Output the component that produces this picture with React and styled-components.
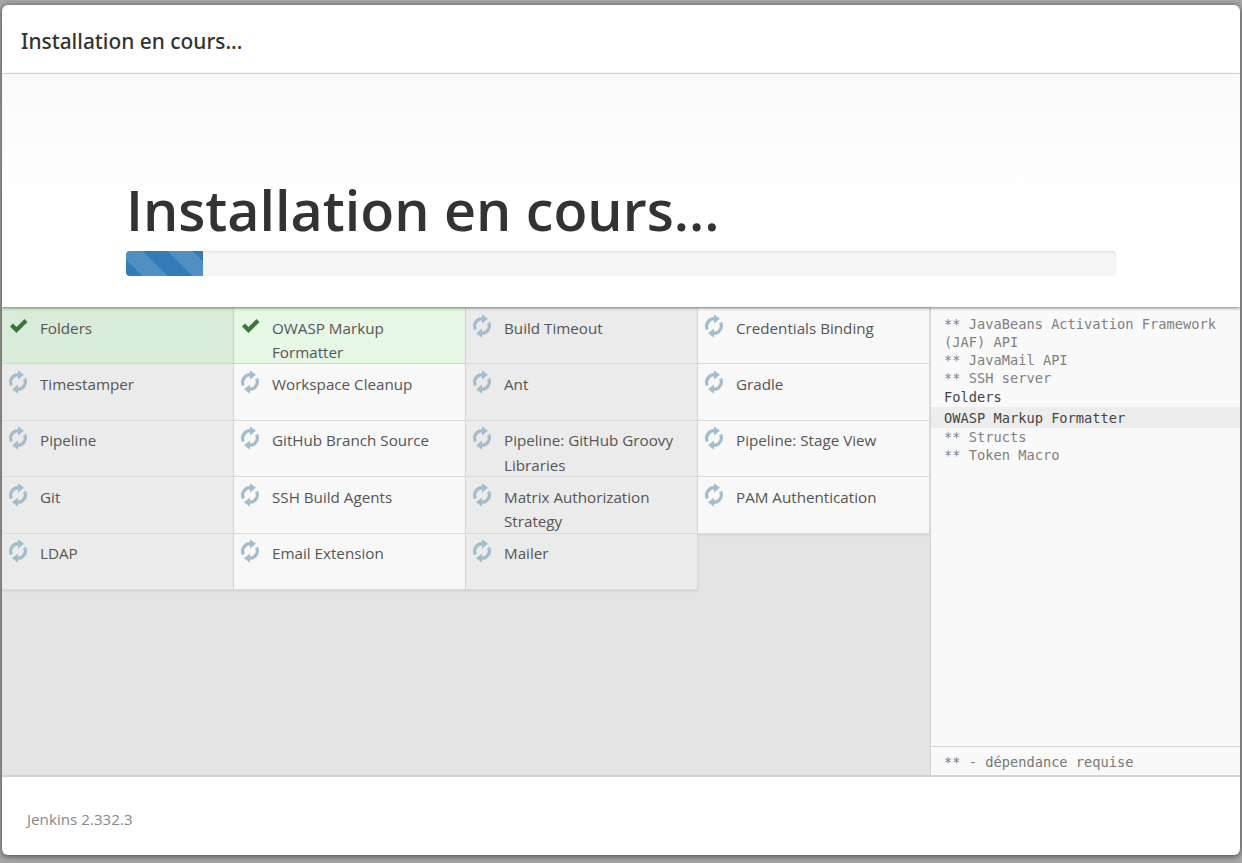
import React from "react";
import styled, { createGlobalStyle } from "styled-components";

const Global = createGlobalStyle`
  html, body { margin: 0; padding: 0; height: 100%; background: #8f8f8f; }
  #root { height: 100%; }
  * { box-sizing: border-box; }
`;

const Backdrop = styled.div`
  width: 1242px;
  height: 863px;
  padding: 5px 2px 8px;
  background: #a6a6a6;
  overflow: hidden;
  font-family: "Open Sans", "Noto Sans", sans-serif;
`;

const Dialog = styled.div`
  width: 1238px;
  height: 850px;
  background: #fff;
  border-radius: 6px;
  box-shadow: 0 1px 6px rgba(0, 0, 0, 0.6);
  overflow: hidden;
  display: flex;
  flex-direction: column;
`;

const Header = styled.div`
  height: 69px;
  flex: none;
  padding: 3px 19px 0;
  display: flex;
  align-items: center;
  border-bottom: 1px solid #e5e5e5;
  font-family: "Noto Sans", "Open Sans", sans-serif;
  font-size: 20.9px;
  font-weight: 500;
  color: #333;
  white-space: nowrap;
`;

const Hero = styled.div`
  height: 233px;
  flex: none;
  padding: 102px 124px 0;
  background: linear-gradient(#f9f9f9, #ffffff 55%);
  box-shadow: 0 1px 3px rgba(0, 0, 0, 0.5);
  position: relative;
  z-index: 1;
`;

const Title = styled.h1`
  margin: 0 0 7px;
  font-size: 55.6px;
  line-height: 68px;
  font-weight: 600;
  color: #333;
  white-space: nowrap;
`;

const Track = styled.div`
  height: 25px;
  border-radius: 4px;
  background: #f5f5f5;
  box-shadow: inset 0 1px 2px rgba(0, 0, 0, 0.1);
  overflow: hidden;
`;

const Fill = styled.div`
  height: 100%;
  background-color: #337ab7;
  background-image: linear-gradient(
    45deg,
    rgba(255, 255, 255, 0.15) 25%,
    transparent 25%,
    transparent 50%,
    rgba(255, 255, 255, 0.15) 50%,
    rgba(255, 255, 255, 0.15) 75%,
    transparent 75%,
    transparent
  );
  background-size: 50px 50px;
  background-position: -8px 0;
`;

const Main = styled.div`
  height: 470px;
  flex: none;
  display: flex;
  background: #e4e4e4;
  border-bottom: 2px solid #d2d2d2;
`;

const Grid = styled.div`
  width: 928px;
  flex: none;
  display: grid;
  grid-template-columns: repeat(4, 232px);
  grid-auto-rows: 56.4px;
  align-content: start;
  padding-top: 1px;
`;

const tones = {
  doneOdd: "#d9ecd9",
  doneEven: "#e6f7e6",
  odd: "#ebebeb",
  even: "#f8f8f8",
};

const Cell = styled.div`
  display: flex;
  align-items: flex-start;
  padding: 7.6px 22px 0 6px;
  background: ${(p) => tones[p.$tone]};
  box-shadow: inset -1px -1px 0 ${(p) => (p.$tone.startsWith("done") ? "#c9dcc9" : "#dcdcdc")},
    0 1px 2px rgba(0, 0, 0, 0.1);
`;

const IconBox = styled.div`
  width: 32px;
  flex: none;
  height: 24px;
  display: flex;
  align-items: flex-start;
`;

const Name = styled.span`
  font-size: 15.2px;
  line-height: 24.3px;
  color: #555;
`;

const Side = styled.div`
  flex: 1;
  display: flex;
  flex-direction: column;
  background: #f9f9f9;
  border-left: 1px solid #d4d4d4;
  font-family: "DejaVu Sans Mono", monospace;
  font-size: 13.7px;
  color: #777;
`;

const Log = styled.div`
  flex: 1;
  padding-top: 8px;
`;

const LogLine = styled.div`
  margin-top: ${(p) => (p.$active ? "1px" : "0")};
  padding: ${(p) => (p.$active ? "2px 10px 1px 13px" : "0 10px 0 13px")};
  line-height: 18.15px;
  color: ${(p) => (p.$plain ? "#444" : "#808080")};
  background: ${(p) => (p.$active ? "#ededed" : "transparent")};
`;

const Legend = styled.div`
  height: 29px;
  flex: none;
  padding: 6px 13px 0;
  line-height: 18px;
  border-top: 1px solid #d4d4d4;
`;

const Footer = styled.div`
  flex: 1;
  display: flex;
  align-items: center;
  padding: 6px 25px 0;
  font-size: 15.2px;
  color: #888;
`;

const Check = () => (
  <svg width="20" height="16" viewBox="0 0 20 16" style={{ marginTop: 2, marginLeft: 1 }}>
    <path d="M1 8.5 L4 5.5 L7.5 9 L15.5 1 L18.5 4 L7.5 15 Z" fill="#3c763d" />
  </svg>
);

const Sync = () => (
  <svg width="20" height="24" viewBox="0 0 20 24" fill="none" style={{ marginTop: -2 }}>
    <path d="M3.4 15.5 A7.6 7.6 0 0 1 10.5 4.6" stroke="#a4bdcd" strokeWidth="3.2" />
    <path d="M10 0.2 L16 4.8 L10 9.5 Z" fill="#a4bdcd" />
    <path d="M16.6 8.5 A7.6 7.6 0 0 1 9.5 19.4" stroke="#a4bdcd" strokeWidth="3.2" />
    <path d="M10 23.8 L4 19.2 L10 14.5 Z" fill="#a4bdcd" />
  </svg>
);

const plugins = [
  ["Folders", 1], ["OWASP Markup Formatter", 1], ["Build Timeout"], ["Credentials Binding"],
  ["Timestamper"], ["Workspace Cleanup"], ["Ant"], ["Gradle"],
  ["Pipeline"], ["GitHub Branch Source"], ["Pipeline: GitHub Groovy Libraries"], ["Pipeline: Stage View"],
  ["Git"], ["SSH Build Agents"], ["Matrix Authorization Strategy"], ["PAM Authentication"],
  ["LDAP"], ["Email Extension"], ["Mailer"],
];

const logs = [
  ["** JavaBeans Activation Framework (JAF) API"],
  ["** JavaMail API"],
  ["** SSH server"],
  ["Folders", true],
  ["OWASP Markup Formatter", true, true],
  ["** Structs"],
  ["** Token Macro"],
];

export default function App() {
  return (
    <>
      <Global />
      <Backdrop>
        <Dialog>
          <Header>Installation en cours...</Header>
          <Hero>
            <Title>Installation en cours...</Title>
            <Track>
              <Fill style={{ width: `${(2 / 25.7) * 100}%` }} />
            </Track>
          </Hero>
          <Main>
            <Grid>
              {plugins.map(([name, done], i) => {
                const odd = i % 4 % 2 === 0;
                const tone = done ? (odd ? "doneOdd" : "doneEven") : odd ? "odd" : "even";
                return (
                  <Cell key={name} $tone={tone}>
                    <IconBox>{done ? <Check /> : <Sync />}</IconBox>
                    <Name>{name}</Name>
                  </Cell>
                );
              })}
            </Grid>
            <Side>
              <Log>
                {logs.map(([t, plain, active]) => (
                  <LogLine key={t} $plain={plain} $active={active}>{t}</LogLine>
                ))}
              </Log>
              <Legend>** - dépendance requise</Legend>
            </Side>
          </Main>
          <Footer>Jenkins 2.332.3</Footer>
        </Dialog>
      </Backdrop>
    </>
  );
}
